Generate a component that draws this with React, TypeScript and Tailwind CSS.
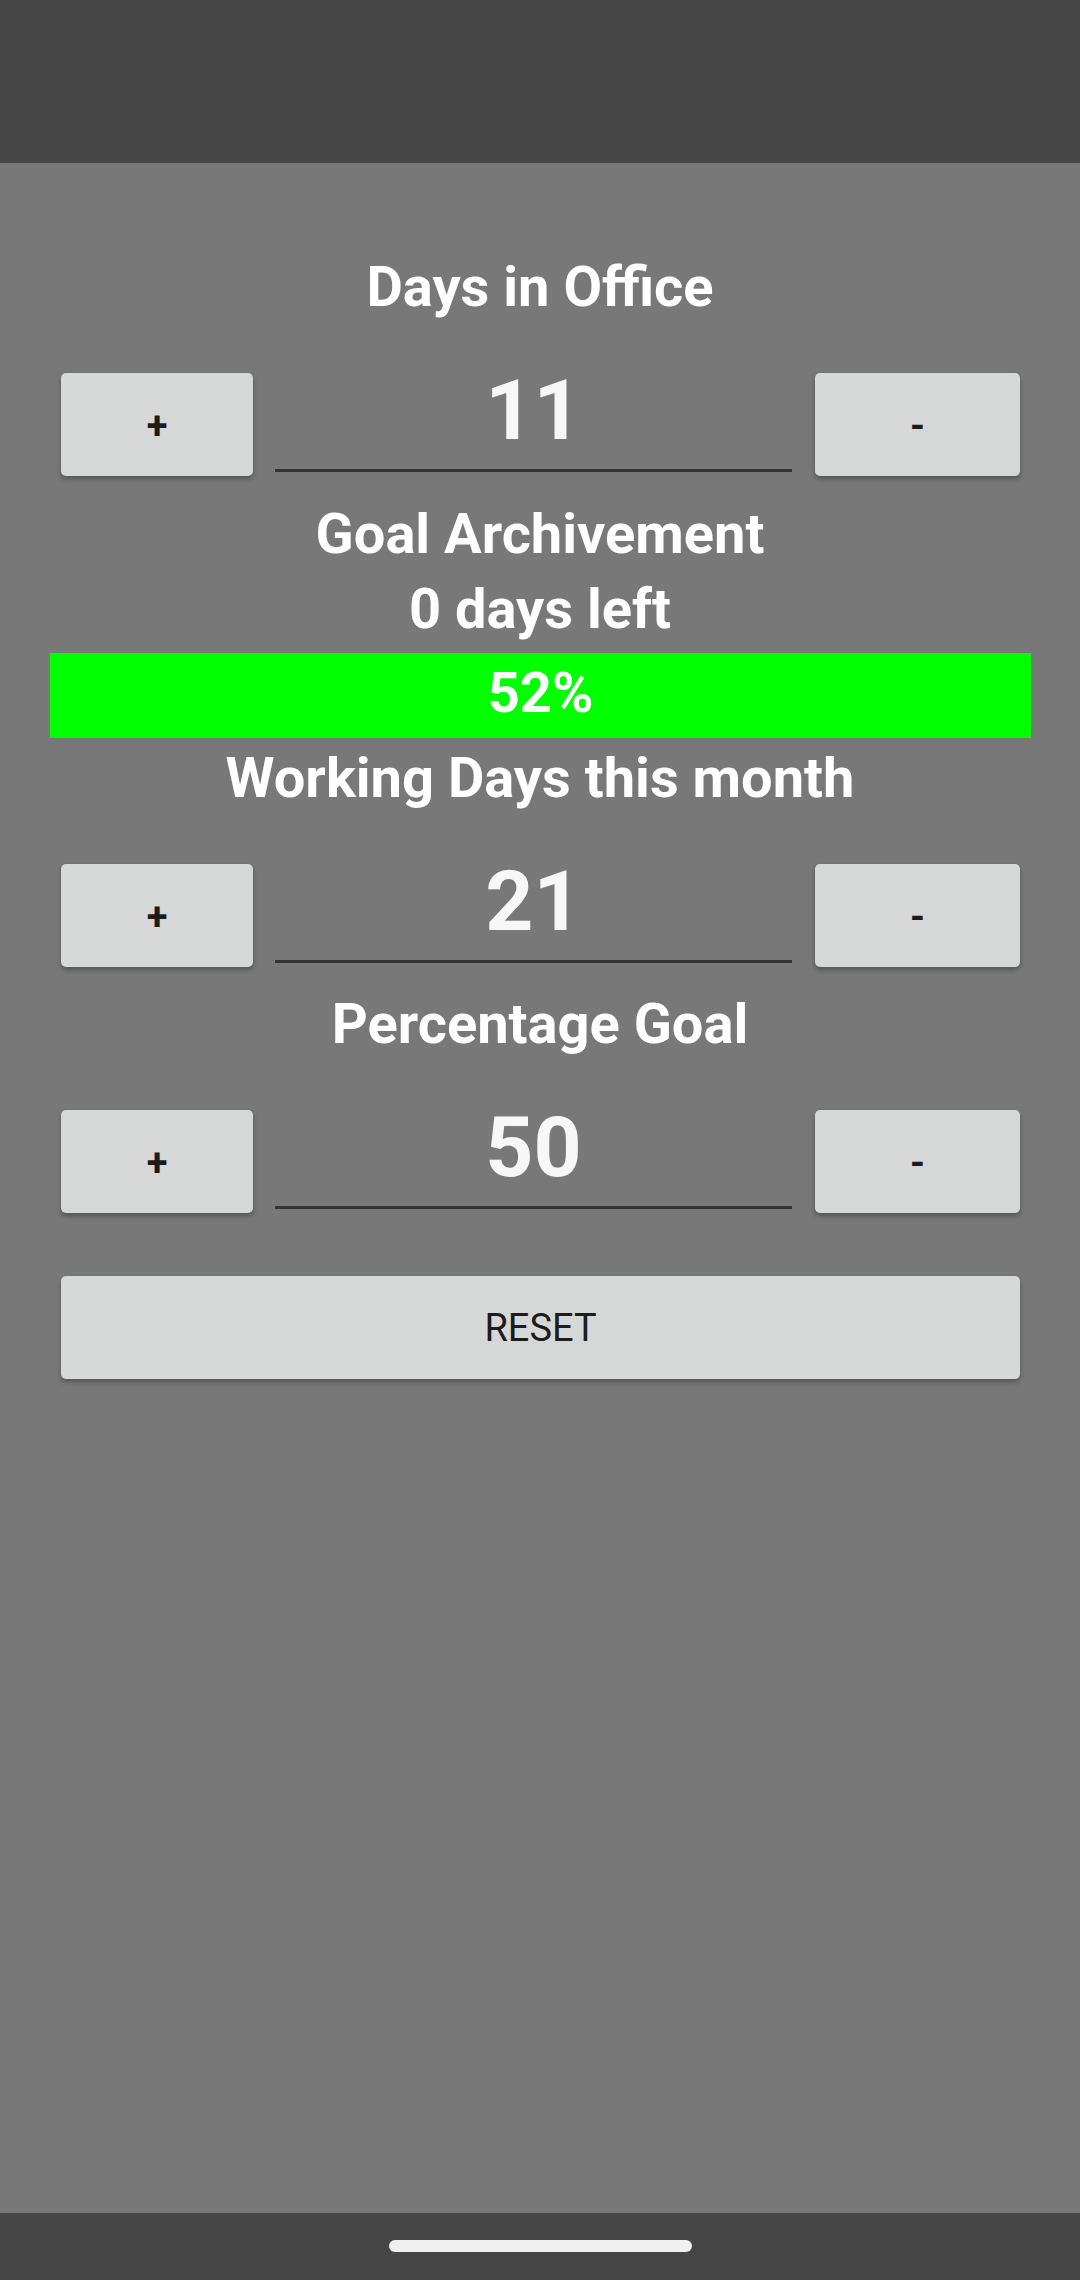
import React from "react";

function Stepper({ value }: { value: string }) {
  return (
    <div className="flex items-start pl-[61px] h-[103px]">
      <button className="w-[192px] h-[103px] pt-[4px] bg-[#d6d8d7] rounded-[5px] shadow-[0_3px_5px_rgba(0,0,0,0.3)] flex items-center justify-center text-[38px] font-bold text-[#1c1c1c]">
        +
      </button>
      <div className="ml-[22px] w-[517px] flex flex-col">
        <div className="text-center text-[84px] leading-[76px] font-bold text-[#f7f7f7]">{value}</div>
        <div className="mt-[20px] h-[3px] bg-[#333333]" />
      </div>
      <button className="ml-[23px] w-[205px] h-[103px] pt-[4px] bg-[#d6d8d7] rounded-[5px] shadow-[0_3px_5px_rgba(0,0,0,0.3)] flex items-center justify-center text-[38px] font-bold text-[#1c1c1c]">
        -
      </button>
    </div>
  );
}

function Title({ children, className = "" }: { children: React.ReactNode; className?: string }) {
  return (
    <div className={"text-center text-[56px] leading-[64px] font-bold text-white " + className}>{children}</div>
  );
}

export default function App() {
  return (
    <div className="w-[1080px] h-[2280px] flex flex-col font-['Roboto',sans-serif] overflow-hidden">
      <div className="h-[163px] bg-[#464646] shrink-0" />
      <div className="flex-1 bg-[#787878] flex flex-col pt-[92px]">
        <Title>Days in Office</Title>
        <div className="mt-[54px]">
          <Stepper value="11" />
        </div>
        <Title className="mt-[26px]">Goal Archivement</Title>
        <Title className="mt-[11px]">0 days left</Title>
        <div className="mt-[12px] mx-[50px] w-[981px] h-[85px] pb-[5px] bg-[#00ff00] flex items-center justify-center text-[56px] leading-[64px] font-bold text-white">
          52%
        </div>
        <Title className="mt-[8px]">Working Days this month</Title>
        <div className="mt-[54px]">
          <Stepper value="21" />
        </div>
        <Title className="mt-[25px]">Percentage Goal</Title>
        <div className="mt-[54px]">
          <Stepper value="50" />
        </div>
        <div className="mt-[63px] pl-[61px]">
          <button className="w-[959px] h-[103px] pt-[2px] bg-[#d6d8d7] rounded-[5px] shadow-[0_3px_5px_rgba(0,0,0,0.3)] flex items-center justify-center text-[38px] font-normal text-[#1c1c1c]">
            RESET
          </button>
        </div>
      </div>
      <div className="h-[67px] bg-[#464646] shrink-0 flex justify-center pt-[27px]">
        <div className="w-[303px] h-[12px] rounded-full bg-[#f0f0f0]" />
      </div>
    </div>
  );
}
